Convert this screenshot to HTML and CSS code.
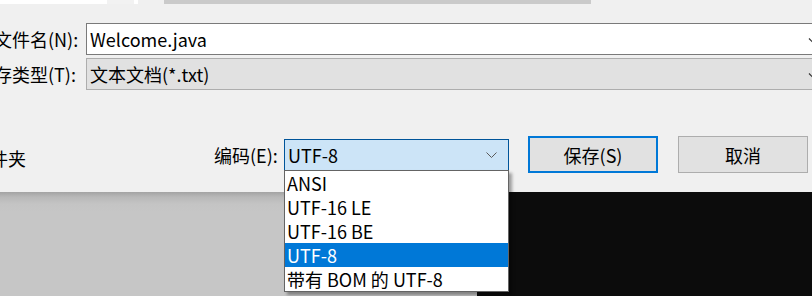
FILE: index.html
```html
<!DOCTYPE html>
<html lang="zh">
<head>
<meta charset="utf-8">
<link rel="stylesheet" href="styles.css">
</head>
<body>
<div class="screen">
  <div class="dialog">
    <div class="strip">
      <span class="seg seg-white1"></span>
      <span class="seg seg-gap1"></span>
      <span class="seg seg-white2"></span>
      <span class="seg seg-gap2"></span>
      <span class="seg seg-bar"></span>
    </div>
    <div class="form">
      <div class="row">
        <label class="label label-name">文件名(N):</label>
        <div class="field field-name">
          <span class="value">Welcome.java</span>
          <svg class="edge-chev" width="8" height="6" viewBox="0 0 8 6"><path d="M1 1.5 L4 4.5 L7 1.5" fill="none" stroke="#333" stroke-width="1.2"/></svg>
        </div>
      </div>
      <div class="row">
        <label class="label label-type">保存类型(T):</label>
        <div class="field field-type">
          <span class="value">文本文档(*.txt)</span>
          <svg class="edge-chev" width="8" height="6" viewBox="0 0 8 6"><path d="M1 1.5 L4 4.5 L7 1.5" fill="none" stroke="#333" stroke-width="1.2"/></svg>
        </div>
      </div>
    </div>
    <div class="actions">
      <span class="folder">隐藏文件夹</span>
      <label class="enc-label">编码(E):</label>
      <div class="select">
        <span class="value">UTF-8</span>
        <svg class="chev" width="11" height="6" viewBox="0 0 11 6"><path d="M0.5 0.5 L5.5 5.5 L10.5 0.5" fill="none" stroke="#5a5a5a" stroke-width="1"/></svg>
      </div>
      <button class="btn btn-primary">保存(S)</button>
      <button class="btn">取消</button>
    </div>
  </div>
  <div class="desktop">
    <div class="desk-gray"></div>
    <div class="desk-black"></div>
  </div>
  <ul class="dropdown">
    <li class="opt">ANSI</li>
    <li class="opt">UTF-16 LE</li>
    <li class="opt">UTF-16 BE</li>
    <li class="opt opt-selected">UTF-8</li>
    <li class="opt">带有 BOM 的 UTF-8</li>
  </ul>
</div>
</body>
</html>
```

FILE: styles.css
```css
* { box-sizing: border-box; }
html, body {
  margin: 0;
  padding: 0;
  width: 812px;
  height: 296px;
  overflow: hidden;
  background: #f0f0f0;
}
body {
  font-family: "Noto Sans CJK SC", "Noto Sans", sans-serif;
  font-size: 18px;
  color: #000;
}
.screen {
  position: relative;
  width: 812px;
  height: 296px;
  overflow: hidden;
}
.dialog {
  height: 192px;
  background: #f0f0f0;
  display: flex;
  flex-direction: column;
}
.strip {
  display: flex;
  height: 4px;
}
.seg { display: block; height: 4px; }
.seg-white1 { width: 107px; background: #ffffff; }
.seg-gap1 { width: 27px; background: #f2f2f2; }
.seg-white2 { width: 4px; background: #ffffff; }
.seg-gap2 { width: 26px; background: #f0f0f0; }
.seg-bar { width: 427px; background: #cacaca; }

.form {
  display: flex;
  flex-direction: column;
  gap: 3px;
  padding-top: 19px;
}
.row {
  display: flex;
  align-items: center;
  height: 32px;
}
.label {
  flex: none;
  white-space: nowrap;
  line-height: 32px;
  margin-right: 8px;
}
.label-name { width: 84px; margin-left: -6px; }
.label-type { width: 102px; margin-left: -24px; }
.field {
  flex: none;
  width: 740px;
  height: 32px;
  display: flex;
  align-items: center;
  padding-left: 3px;
  position: relative;
}
.field-name {
  background: #ffffff;
  border: 1px solid #7a7a7a;
}
.field-type {
  background: #e1e1e1;
  border: 1px solid #adadad;
}
.edge-chev {
  position: absolute;
  left: 721px;
  top: 13px;
}
.value { white-space: nowrap; }

.actions {
  display: flex;
  align-items: center;
  height: 37px;
  margin-top: 46px;
}
.folder {
  flex: none;
  width: 90px;
  margin-left: -64px;
  white-space: nowrap;
  margin-top: 6px;
}
.enc-label {
  flex: none;
  margin-left: 188px;
  width: 70px;
  white-space: nowrap;
}
.select {
  flex: none;
  width: 225px;
  height: 32px;
  background: #cce4f7;
  border: 1px solid #005499;
  display: flex;
  align-items: center;
  justify-content: space-between;
  padding-left: 3px;
  padding-right: 11px;
}
.chev { display: block; margin-top: 1px; }
.btn {
  flex: none;
  font: inherit;
  color: #000;
  width: 130px;
  height: 37px;
  background: #e1e1e1;
  border: 1px solid #adadad;
  padding: 0;
  margin: 0;
}
.btn-primary {
  border: 2px solid #0078d7;
  margin-left: 19px;
}
.btn + .btn { margin-left: 20px; }

.desktop {
  display: flex;
  height: 104px;
}
.desk-gray {
  width: 477px;
  background: linear-gradient(to bottom, #a3a3a3 0px, #b8b8b8 5px, #c4c4c4 12px, #c6c6c6 20px);
}
.desk-black {
  flex: 1;
  background: #0c0c0c;
}

.dropdown {
  position: absolute;
  left: 284px;
  top: 170px;
  width: 225px;
  margin: 0;
  padding: 0;
  list-style: none;
  background: #ffffff;
  border: 1px solid #646464;
  box-shadow: 3px 3px 3px rgba(0,0,0,0.35);
}
.opt {
  height: 24px;
  line-height: 24px;
  padding-left: 2px;
  white-space: nowrap;
}
.opt-selected {
  background: #0078d7;
  color: #ffffff;
}
```
